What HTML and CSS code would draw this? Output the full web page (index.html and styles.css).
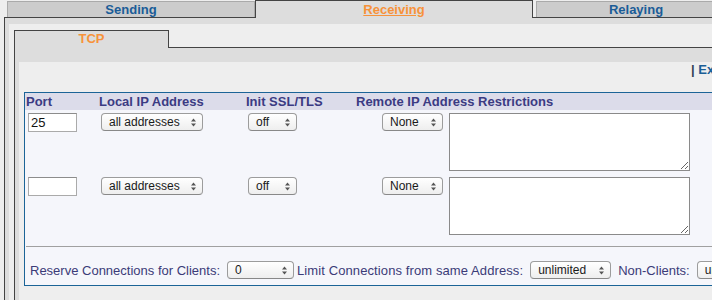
FILE: index.html
```html
<!doctype html>
<html lang="en">

<head>
  <meta charset="utf-8">
  <title>Receiving - TCP</title>
  <link rel="stylesheet" href="styles.css">
</head>

<body>
  <div class="tabs">
    <a class="tab tab-sending" href="#sending">Sending</a>
    <a class="tab tab-active tab-receiving" href="#receiving">Receiving</a>
    <a class="tab tab-relaying" href="#relaying">Relaying</a>
  </div>

  <div class="panel">
    <div class="panel-inner">
      <div class="tabs subtabs">
        <span class="tab tab-active tab-tcp">TCP</span>
      </div>

      <div class="panel subpanel">
        <div class="panel-inner">
          <div class="toolbar"><span class="bar">|</span> <a href="#export">Export</a></div>

          <div class="listeners">
            <div class="row head">
              <div class="cell">Port</div>
              <div class="cell">Local IP Address</div>
              <div class="cell">Init SSL/TLS</div>
              <div class="cell">Remote IP Address Restrictions</div>
            </div>

            <div class="row">
              <div class="cell"><input class="port" type="text" value="25"></div>
              <div class="cell"><span class="sel w-addr">all addresses<svg width="5" height="9" viewBox="0 0 5 9"><path d="M0 3.6L2.5 0.6L5 3.6Z M0 5.4L2.5 8.4L5 5.4Z"/></svg></span></div>
              <div class="cell"><span class="sel w-off">off<svg width="5" height="9" viewBox="0 0 5 9"><path d="M0 3.6L2.5 0.6L5 3.6Z M0 5.4L2.5 8.4L5 5.4Z"/></svg></span></div>
              <div class="cell remote">
                <span class="sel w-none">None<svg width="5" height="9" viewBox="0 0 5 9"><path d="M0 3.6L2.5 0.6L5 3.6Z M0 5.4L2.5 8.4L5 5.4Z"/></svg></span>
                <textarea class="hosts"></textarea>
              </div>
            </div>

            <div class="row">
              <div class="cell"><input class="port" type="text" value=""></div>
              <div class="cell"><span class="sel w-addr">all addresses<svg width="5" height="9" viewBox="0 0 5 9"><path d="M0 3.6L2.5 0.6L5 3.6Z M0 5.4L2.5 8.4L5 5.4Z"/></svg></span></div>
              <div class="cell"><span class="sel w-off">off<svg width="5" height="9" viewBox="0 0 5 9"><path d="M0 3.6L2.5 0.6L5 3.6Z M0 5.4L2.5 8.4L5 5.4Z"/></svg></span></div>
              <div class="cell remote">
                <span class="sel w-none">None<svg width="5" height="9" viewBox="0 0 5 9"><path d="M0 3.6L2.5 0.6L5 3.6Z M0 5.4L2.5 8.4L5 5.4Z"/></svg></span>
                <textarea class="hosts"></textarea>
              </div>
            </div>

            <div class="limits">
              <span>Reserve Connections for Clients:</span>
              <span class="sel w-zero">0<svg width="5" height="9" viewBox="0 0 5 9"><path d="M0 3.6L2.5 0.6L5 3.6Z M0 5.4L2.5 8.4L5 5.4Z"/></svg></span>
              <span class="lbl-same">Limit Connections from same Address:</span>
              <span class="sel w-unl">unlimited<svg width="5" height="9" viewBox="0 0 5 9"><path d="M0 3.6L2.5 0.6L5 3.6Z M0 5.4L2.5 8.4L5 5.4Z"/></svg></span>
              <span class="lbl-non">Non-Clients:</span>
              <span class="sel w-unl">unlimited<svg width="5" height="9" viewBox="0 0 5 9"><path d="M0 3.6L2.5 0.6L5 3.6Z M0 5.4L2.5 8.4L5 5.4Z"/></svg></span>
            </div>
          </div>
        </div>
      </div>
    </div>
  </div>
</body>

</html>
```

FILE: styles.css
```css
html, body { margin:0; background-color:#eee; }
body { width:712px; height:300px; overflow:hidden; font-family:"Liberation Sans",Arial,sans-serif; }

/* tab strips */
.tabs { display:flex; align-items:flex-start; height:17px; padding-left:7px; width:900px; }
.tab { box-sizing:border-box; display:block; height:16px; margin-top:1px; border:solid 1px #aaa; border-bottom:0; background-color:#ccc; text-align:center; font:bold 13px/15px "Liberation Sans",Arial,sans-serif; color:#1a5c98; text-decoration:none; }
.tab-active { position:relative; z-index:1; height:18px; margin-top:0; padding-top:1px; border-color:#444; background-color:#ddd; color:#f7923a; }
.tab-sending { width:248px; }
.tab-receiving { width:278px; text-decoration:underline; }
.tab-relaying { width:200px; margin-left:3px; }

.subtabs { padding-left:0; }
.tab-tcp { width:155px; padding-top:0; line-height:16px; text-decoration:none; }

/* panels */
.panel { margin-left:4px; border-top:solid 1px #444; border-left:solid 1px #444; background-color:#ddd; padding:6px 0 0 4px; width:900px; }
.panel-inner { background-color:#eee; padding:6px 0 20px 5px; }
.subpanel { margin-left:0; padding:5px 0 0 4px; }
.subpanel > .panel-inner { padding:0 0 40px 5px; }

.toolbar { height:16px; margin:9px 0 14px; padding-left:667px; font:bold 13px/16px "Liberation Sans",Arial,sans-serif; color:#345; }
.toolbar a { color:#1b5e96; text-decoration:none; }

/* listener table */
.listeners { width:760px; border:solid 1px #1b6497; background-color:#f5f6fb; }
.row { display:grid; grid-template-columns:73px 147px 110px 1fr; padding:3px 0; height:58px; }
.row.head { height:17px; padding:0; background-color:#dcdcea; font:bold 13px/17px "Liberation Sans",Arial,sans-serif; color:#3b3b83; }
.head .cell { padding-left:1px; white-space:nowrap; }
.row .cell { display:flex; align-items:flex-start; }
.row:not(.head) .cell > :first-child { margin-left:3px; }
.remote .sel { margin-left:27px !important; }

.port { box-sizing:border-box; width:49px; height:19px; margin:0; padding:0 2px; border:solid 1px #aaa; border-top-color:#8c8c8c; background-color:#fff; font:13px "Liberation Sans",Arial,sans-serif; color:#111; }
.hosts { box-sizing:border-box; width:241px; height:58px; margin:0 0 0 6px; padding:2px; border:solid 1px #8a8a8a; background-color:#fff; font:12px "Liberation Sans",Arial,sans-serif; }

/* mac style popup buttons */
.sel { box-sizing:border-box; display:inline-flex; align-items:center; height:18px; padding-left:7px; border:solid 1px #9c9c9c; border-bottom-color:#888; border-radius:4px; background:linear-gradient(#fff,#eee); font:12px "Liberation Sans",Arial,sans-serif; color:#1a1a1a; white-space:nowrap; }
.sel svg { margin-left:auto; margin-right:6px; fill:#555; }
.w-addr { width:102px; }
.w-off { width:49px; }
.w-none { width:61px; }
.w-zero { width:67px; }
.w-unl { width:81px; }

.limits { display:flex; align-items:center; margin:8px 0 0 1px; padding:14px 0 6px 4px; border-top:solid 1px #a0a0a0; font-size:13px; color:#3b3b78; white-space:nowrap; }
.limits .sel { margin-left:7px; }
.lbl-same { margin-left:3px; letter-spacing:0.1px; }
.lbl-non { margin-left:7px; }
```
